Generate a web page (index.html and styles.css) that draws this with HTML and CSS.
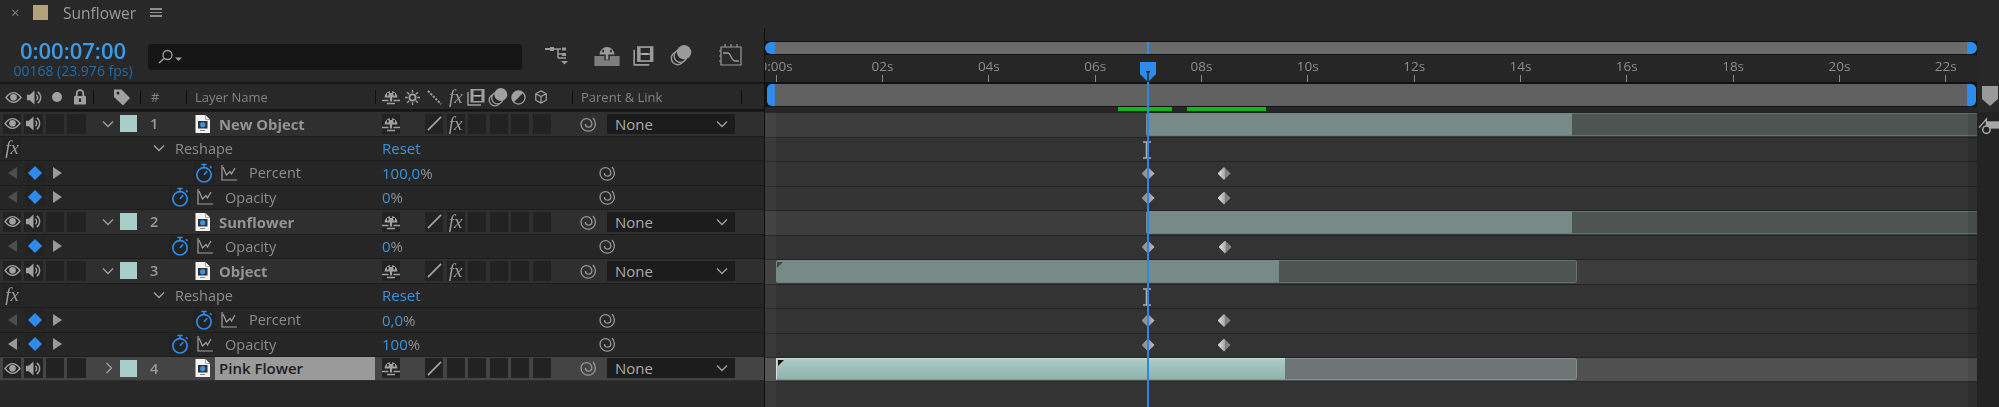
FILE: index.html
```html
<!DOCTYPE html>
<html lang="en">
<head>
<meta charset="utf-8">
<title>Sunflower timeline</title>
<link rel="stylesheet" href="styles.css">
</head>
<body>
<svg class="defs" width="0" height="0" aria-hidden="true">
  <symbol id="eye" viewBox="0 0 18 14"><path d="M1 7C4 3 6.500 1.800 9 1.800S14 3 17 7c-3 4-5.500 5.200-8 5.200S4 11 1 7z" fill="none" stroke="currentColor" stroke-width="1.500"/><circle cx="9" cy="6.800" r="3.600" fill="currentColor"/></symbol>
  <symbol id="speaker" viewBox="0 0 18 18"><path d="M1 6h3l5-4.500v15L4 12H1z" fill="currentColor"/><path d="M11 6a4 4 0 0 1 0 6M12.500 3a7.500 7.500 0 0 1 0 12" fill="none" stroke="currentColor" stroke-width="1.500"/></symbol>
  <symbol id="lock" viewBox="0 0 14 16"><rect x="1" y="7" width="12" height="8.500" rx="1" fill="currentColor"/><path d="M3.700 7V4.500a3.300 3.300 0 0 1 6.600 0V7" fill="none" stroke="currentColor" stroke-width="1.800"/><rect x="6" y="9.500" width="2" height="3.500" fill="#262626"/></symbol>
  <symbol id="tag" viewBox="0 0 18 18"><path d="M1 1.500h7.500L17 10l-7 7.500L1 9z" fill="currentColor"/><circle cx="5" cy="5" r="1.500" fill="#262626"/></symbol>
  <symbol id="shy" viewBox="0 0 18 16"><path d="M2.500 8.500a6.500 6.500 0 0 1 13 0z" fill="currentColor"/><rect x="7.900" y="2" width="2.200" height="10.500" fill="currentColor"/><rect x="5" y="4" width="1.700" height="2.500" fill="#262626"/><rect x="11.300" y="4" width="1.700" height="2.500" fill="#262626"/><rect x="7.900" y="2" width="2.200" height="2" fill="#262626"/><path d="M0 11.500h6.500M11.500 11.500H18M5 14.500h8" stroke="currentColor" stroke-width="1.300"/></symbol>
  <symbol id="sun" viewBox="0 0 16 16"><circle cx="8" cy="8" r="3.300" fill="none" stroke="currentColor" stroke-width="2"/><path d="M8 0v3M8 13v3M0 8h3M13 8h3M2.300 2.300l2.200 2.200M11.500 11.500l2.200 2.200M13.700 2.300l-2.200 2.200M4.500 11.500l-2.200 2.200" stroke="currentColor" stroke-width="1.500"/></symbol>
  <symbol id="dots" viewBox="0 0 16 16"><path d="M1 1l14 14" stroke="currentColor" stroke-width="2" stroke-dasharray="2.400 1.400"/></symbol>
  <symbol id="frames" viewBox="0 0 18 18"><path d="M1 4v13h13" fill="none" stroke="currentColor" stroke-width="1.400"/><rect x="3.500" y="1" width="14" height="13.500" fill="currentColor"/><rect x="6.500" y="2.500" width="8" height="4.500" fill="#262626"/><rect x="6.500" y="8.500" width="8" height="4.500" fill="#262626"/><path d="M8 7.700h5" stroke="#bbb" stroke-width="1.300"/></symbol>
  <symbol id="stack" viewBox="0 0 20 20"><circle cx="7" cy="13" r="5.800" fill="none" stroke="currentColor" stroke-width="1.300"/><circle cx="9.500" cy="11" r="5.800" fill="#262626" stroke="currentColor" stroke-width="1.300"/><circle cx="12.800" cy="7.500" r="6.500" fill="currentColor"/></symbol>
  <symbol id="adjust" viewBox="0 0 16 16"><circle cx="8" cy="8" r="7" fill="none" stroke="currentColor" stroke-width="1.400"/><path d="M3 13A7 7 0 0 1 13 3z" fill="currentColor"/></symbol>
  <symbol id="cube" viewBox="0 0 16 16"><path d="M8 1l6 3.300v7.400L8 15l-6-3.300V4.300zM2 4.300l6 3.300 6-3.300M8 7.600V15" fill="none" stroke="currentColor" stroke-width="1.400"/></symbol>
  <symbol id="slash" viewBox="0 0 16 16"><path d="M1 15L15 1" stroke="currentColor" stroke-width="1.700"/></symbol>
  <symbol id="spiral" viewBox="0 0 18 18"><path d="M6.500 9A3.200 3.200 0 0 0 12.900 9A5.400 5.400 0 0 0 2 9A7.200 7.200 0 0 0 16.400 9Q16.400 5.500 14 3" fill="none" stroke="currentColor" stroke-width="1.300"/></symbol>
  <symbol id="doc" viewBox="0 0 15 18"><path d="M.5 0h10l4.500 4.500V18H.5z" fill="#f2f2f2"/><path d="M10.500 0v4.500H15" fill="none" stroke="#999" stroke-width=".8"/><rect x="3" y="6" width="9.500" height="7.500" fill="#333"/><circle cx="7.700" cy="9.700" r="2.600" fill="#3a93e6"/><path d="M5 15.500h5" stroke="#888"/></symbol>
  <symbol id="watch" viewBox="0 0 20 22"><circle cx="10" cy="13" r="8" fill="none" stroke="currentColor" stroke-width="1.800"/><path d="M7 1.500h6M10 2v3M10 13l3.500-4" fill="none" stroke="currentColor" stroke-width="1.800"/><path d="M16.500 3.500l1.800 1.800" stroke="currentColor" stroke-width="1.800"/></symbol>
  <symbol id="graph" viewBox="0 0 16 16"><path d="M1 0v15h15" fill="none" stroke="currentColor" stroke-width="1.200"/><path d="M2 2l3.500 8L9 6.500 10.500 9 14 3" fill="none" stroke="currentColor" stroke-width="1.200"/></symbol>
  <symbol id="chev-d" viewBox="0 0 12 8"><path d="M1 1.500l5 5 5-5" fill="none" stroke="currentColor" stroke-width="1.300"/></symbol>
  <symbol id="chev-r" viewBox="0 0 8 12"><path d="M1.500 1l5 5-5 5" fill="none" stroke="currentColor" stroke-width="1.300"/></symbol>
  <symbol id="tri-l" viewBox="0 0 9 12"><path d="M9 0v12L0 6z" fill="currentColor"/></symbol>
  <symbol id="tri-r" viewBox="0 0 9 12"><path d="M0 0v12l9-6z" fill="currentColor"/></symbol>
</svg>

<div class="app">
  <header class="tabbar">
    <span class="tab-close">×</span>
    <span class="tab-swatch"></span>
    <span class="tab-title">Sunflower</span>
    <span class="tab-menu"><i></i><i></i><i></i></span>
  </header>

  <div class="panel">
    <section class="layers">
      <div class="controls">
        <div class="clock">
          <div class="clock-time">0:00:07:00</div>
          <div class="clock-frames">00168 (23.976 fps)</div>
        </div>
        <div class="search">
          <svg class="search-icon" viewBox="0 0 24 14"><circle cx="9.500" cy="5.500" r="4.500" fill="none" stroke="currentColor" stroke-width="1.300"/><path d="M6 9l-5 4.500" stroke="currentColor" stroke-width="1.500"/><path d="M17 8h7l-3.500 3.500z" fill="currentColor"/></svg>
        </div>
        <div class="tools">
          <svg class="tool tool-flow" viewBox="0 0 24 20"><path d="M5 4h8M13 4v9M10 4h6M13 9h8M13 13h8" stroke="currentColor" stroke-width="1.500" fill="none"/><rect x="0" y="3" width="5" height="2" fill="currentColor"/><rect x="5" y="2" width="4" height="4" fill="currentColor"/><rect x="17" y="2.500" width="4" height="3" fill="currentColor"/><rect x="17" y="8" width="4" height="3" fill="currentColor"/><path d="M16 16h7l-3.500 3.500z" fill="currentColor"/></svg>
          <svg class="tool tool-shy" viewBox="0 0 24 20"><path d="M5 9a7 7 0 0 1 14 0z" fill="currentColor"/><rect x="10.800" y="3" width="2.400" height="11" fill="currentColor"/><rect x="7.500" y="4.500" width="1.600" height="2.500" fill="#282828"/><rect x="15" y="4.500" width="1.600" height="2.500" fill="#282828"/><path d="M0 10.500h9.500v4h5v-4H24V20H0z" fill="currentColor" fill-opacity=".75"/></svg>
          <svg class="tool tool-frames"><use href="#frames"/></svg>
          <svg class="tool tool-stack"><use href="#stack"/></svg>
          <svg class="tool tool-graph" viewBox="0 0 24 22"><path d="M2 3h20v18H2zM0 7h2M0 12h2M0 17h2M6 3V0M12 3V0M18 3V0" fill="none" stroke="currentColor" stroke-width="1.200"/><path d="M4 9h5c3 0 3 8 7 8h4" fill="none" stroke="currentColor" stroke-width="1.300"/></svg>
        </div>
      </div>

      <div class="colhead">
        <div class="colhead-av">
          <svg class="i-eye"><use href="#eye"/></svg>
          <svg class="i-spk"><use href="#speaker"/></svg>
          <span class="i-dot"></span>
          <svg class="i-lock"><use href="#lock"/></svg>
        </div>
        <div class="colhead-tag"><svg class="i-tag"><use href="#tag"/></svg></div>
        <div class="colhead-num">#</div>
        <div class="colhead-name">Layer Name</div>
        <div class="colhead-sw">
          <svg class="i-shy"><use href="#shy"/></svg>
          <svg class="i-sun"><use href="#sun"/></svg>
          <svg class="i-dots"><use href="#dots"/></svg>
          <span class="fx">fx</span>
          <svg class="i-frames"><use href="#frames"/></svg>
          <svg class="i-stack"><use href="#stack"/></svg>
          <svg class="i-adj"><use href="#adjust"/></svg>
          <svg class="i-cube"><use href="#cube"/></svg>
        </div>
        <div class="colhead-parent">Parent &amp; Link</div>
      </div>

      <div class="layer-row">
        <div class="av"><span class="box"><svg class="i-eye"><use href="#eye"/></svg></span><span class="box"><svg class="i-spk"><use href="#speaker"/></svg></span><span class="box"></span><span class="box"></span></div>
        <div class="twirl"><svg class="i-chev"><use href="#chev-d"/></svg></div>
        <span class="swatch"></span><span class="num">1</span>
        <div class="file"><svg class="i-doc"><use href="#doc"/></svg></div>
        <div class="name">New Object</div>
        <div class="switches"><span class="box"><svg class="i-shy"><use href="#shy"/></svg></span><span class="box none"></span><span class="box"><svg class="i-slash"><use href="#slash"/></svg></span><span class="box"><span class="fx">fx</span></span><span class="box"></span><span class="box"></span><span class="box"></span><span class="box"></span></div>
        <div class="parent"><svg class="i-spiral"><use href="#spiral"/></svg><div class="select"><span>None</span><svg class="i-chev"><use href="#chev-d"/></svg></div></div>
      </div>
      <div class="prop-row">
        <div class="fxcell"><span class="box"><span class="fx">fx</span></span></div>
        <div class="prop-name effect"><svg class="i-chev"><use href="#chev-d"/></svg><span>Reshape</span></div>
        <div class="link">Reset</div>
      </div>
      <div class="prop-row">
        <div class="nav"><svg class="i-tri off"><use href="#tri-l"/></svg><span class="box kf"><i></i></span><svg class="i-tri"><use href="#tri-r"/></svg></div>
        <div class="prop-name deep"><span class="box watchbox"><svg class="i-watch"><use href="#watch"/></svg></span><svg class="i-graph"><use href="#graph"/></svg><span class="label">Percent</span></div>
        <div class="value"><b>100,0</b>%</div>
        <svg class="i-spiral"><use href="#spiral"/></svg>
      </div>
      <div class="prop-row">
        <div class="nav"><svg class="i-tri off"><use href="#tri-l"/></svg><span class="box kf"><i></i></span><svg class="i-tri"><use href="#tri-r"/></svg></div>
        <div class="prop-name"><span class="box watchbox"><svg class="i-watch"><use href="#watch"/></svg></span><svg class="i-graph"><use href="#graph"/></svg><span class="label">Opacity</span></div>
        <div class="value"><b>0</b>%</div>
        <svg class="i-spiral"><use href="#spiral"/></svg>
      </div>

      <div class="layer-row">
        <div class="av"><span class="box"><svg class="i-eye"><use href="#eye"/></svg></span><span class="box"><svg class="i-spk"><use href="#speaker"/></svg></span><span class="box"></span><span class="box"></span></div>
        <div class="twirl"><svg class="i-chev"><use href="#chev-d"/></svg></div>
        <span class="swatch"></span><span class="num">2</span>
        <div class="file"><svg class="i-doc"><use href="#doc"/></svg></div>
        <div class="name">Sunflower</div>
        <div class="switches"><span class="box"><svg class="i-shy"><use href="#shy"/></svg></span><span class="box none"></span><span class="box"><svg class="i-slash"><use href="#slash"/></svg></span><span class="box"><span class="fx">fx</span></span><span class="box"></span><span class="box"></span><span class="box"></span><span class="box"></span></div>
        <div class="parent"><svg class="i-spiral"><use href="#spiral"/></svg><div class="select"><span>None</span><svg class="i-chev"><use href="#chev-d"/></svg></div></div>
      </div>
      <div class="prop-row">
        <div class="nav"><svg class="i-tri off"><use href="#tri-l"/></svg><span class="box kf"><i></i></span><svg class="i-tri"><use href="#tri-r"/></svg></div>
        <div class="prop-name"><span class="box watchbox"><svg class="i-watch"><use href="#watch"/></svg></span><svg class="i-graph"><use href="#graph"/></svg><span class="label">Opacity</span></div>
        <div class="value"><b>0</b>%</div>
        <svg class="i-spiral"><use href="#spiral"/></svg>
      </div>

      <div class="layer-row">
        <div class="av"><span class="box"><svg class="i-eye"><use href="#eye"/></svg></span><span class="box"><svg class="i-spk"><use href="#speaker"/></svg></span><span class="box"></span><span class="box"></span></div>
        <div class="twirl"><svg class="i-chev"><use href="#chev-d"/></svg></div>
        <span class="swatch"></span><span class="num">3</span>
        <div class="file"><svg class="i-doc"><use href="#doc"/></svg></div>
        <div class="name">Object</div>
        <div class="switches"><span class="box"><svg class="i-shy"><use href="#shy"/></svg></span><span class="box none"></span><span class="box"><svg class="i-slash"><use href="#slash"/></svg></span><span class="box"><span class="fx">fx</span></span><span class="box"></span><span class="box"></span><span class="box"></span><span class="box"></span></div>
        <div class="parent"><svg class="i-spiral"><use href="#spiral"/></svg><div class="select"><span>None</span><svg class="i-chev"><use href="#chev-d"/></svg></div></div>
      </div>
      <div class="prop-row">
        <div class="fxcell"><span class="box"><span class="fx">fx</span></span></div>
        <div class="prop-name effect"><svg class="i-chev"><use href="#chev-d"/></svg><span>Reshape</span></div>
        <div class="link">Reset</div>
      </div>
      <div class="prop-row">
        <div class="nav"><svg class="i-tri off"><use href="#tri-l"/></svg><span class="box kf"><i></i></span><svg class="i-tri"><use href="#tri-r"/></svg></div>
        <div class="prop-name deep"><span class="box watchbox"><svg class="i-watch"><use href="#watch"/></svg></span><svg class="i-graph"><use href="#graph"/></svg><span class="label">Percent</span></div>
        <div class="value"><b>0,0</b>%</div>
        <svg class="i-spiral"><use href="#spiral"/></svg>
      </div>
      <div class="prop-row">
        <div class="nav"><svg class="i-tri"><use href="#tri-l"/></svg><span class="box kf"><i></i></span><svg class="i-tri"><use href="#tri-r"/></svg></div>
        <div class="prop-name"><span class="box watchbox"><svg class="i-watch"><use href="#watch"/></svg></span><svg class="i-graph"><use href="#graph"/></svg><span class="label">Opacity</span></div>
        <div class="value"><b>100</b>%</div>
        <svg class="i-spiral"><use href="#spiral"/></svg>
      </div>

      <div class="layer-row selected">
        <div class="av"><span class="box"><svg class="i-eye"><use href="#eye"/></svg></span><span class="box"><svg class="i-spk"><use href="#speaker"/></svg></span><span class="box"></span><span class="box"></span></div>
        <div class="twirl"><svg class="i-chev-r"><use href="#chev-r"/></svg></div>
        <span class="swatch"></span><span class="num">4</span>
        <div class="file"><svg class="i-doc"><use href="#doc"/></svg></div>
        <div class="name">Pink Flower</div>
        <div class="switches"><span class="box"><svg class="i-shy"><use href="#shy"/></svg></span><span class="box none"></span><span class="box"><svg class="i-slash"><use href="#slash"/></svg></span><span class="box"></span><span class="box"></span><span class="box"></span><span class="box"></span><span class="box"></span></div>
        <div class="parent"><svg class="i-spiral"><use href="#spiral"/></svg><div class="select"><span>None</span><svg class="i-chev"><use href="#chev-d"/></svg></div></div>
      </div>
    </section>

    <section class="timeline">
      <div class="tl-top">
        <div class="tl-head">
          <div class="nav-bar"><span class="cap cap-l"></span><span class="nav-fill"></span><span class="cap cap-r"></span></div>
          <div class="ruler">
            <div class="tick"><span>0:00s</span></div>
            <div class="tick"><span>02s</span></div>
            <div class="tick"><span>04s</span></div>
            <div class="tick"><span>06s</span></div>
            <div class="tick"><span>08s</span></div>
            <div class="tick"><span>10s</span></div>
            <div class="tick"><span>12s</span></div>
            <div class="tick"><span>14s</span></div>
            <div class="tick"><span>16s</span></div>
            <div class="tick"><span>18s</span></div>
            <div class="tick"><span>20s</span></div>
            <div class="tick"><span>22s</span></div>
          </div>
          <div class="work-bar"><span class="wcap wcap-l"></span><span class="nav-fill"></span><span class="wcap wcap-r"></span></div>
          <div class="cache"><span class="green g1"></span><span class="green g2"></span></div>
        </div>
        <div class="marker-well"><svg class="i-marker" viewBox="0 0 16 20"><path d="M0 0h16v13l-8 7-8-7z" fill="currentColor"/></svg></div>
      </div>
      <div class="tl-body">
        <div class="tl-rows">
          <div class="tl-row layer"><span class="bar bright" style="margin-left:381px;width:426px"></span><span class="bar dim grow"></span></div>
          <div class="tl-row"><svg class="i-beam" viewBox="0 0 10 18"><path d="M0 1h8M0 17h8M3.500 1v16" fill="none" stroke="currentColor" stroke-width="1.600"/></svg></div>
          <div class="tl-row"><i class="key now" style="left:383px"></i><i class="key" style="left:459px"></i></div>
          <div class="tl-row"><i class="key now" style="left:383px"></i><i class="key" style="left:459px"></i></div>
          <div class="tl-row layer"><span class="bar bright" style="margin-left:381px;width:426px"></span><span class="bar dim grow"></span></div>
          <div class="tl-row"><i class="key now" style="left:383px"></i><i class="key" style="left:460px"></i></div>
          <div class="tl-row layer"><span class="bar bright" style="margin-left:11px;width:503px"><u class="corner"></u></span><span class="bar dim end" style="width:298px"></span></div>
          <div class="tl-row"><svg class="i-beam" viewBox="0 0 10 18"><path d="M0 1h8M0 17h8M3.500 1v16" fill="none" stroke="currentColor" stroke-width="1.600"/></svg></div>
          <div class="tl-row"><i class="key now" style="left:383px"></i><i class="key" style="left:459px"></i></div>
          <div class="tl-row"><i class="key now" style="left:383px"></i><i class="key" style="left:459px"></i></div>
          <div class="tl-row layer selected"><span class="bar vivid" style="margin-left:11px;width:509px"><u class="corner"></u></span><span class="bar dim end sel" style="width:292px"></span></div>
        </div>
        <div class="gutter"><svg class="i-comp" viewBox="0 0 20 17"><path d="M1 10L8 2v8" fill="none" stroke="currentColor" stroke-width="1.300"/><path d="M8 4h12v7H8z" fill="currentColor"/><circle cx="8" cy="12" r="3.500" fill="#222" stroke="currentColor" stroke-width="1.500"/></svg></div>
      </div>
      <div class="strip-lead"></div>
      <div class="strip-trail"></div>
      <div class="playhead">
        <span class="playhead-tick"></span>
        <svg class="playhead-head" viewBox="0 0 16 20"><path d="M0 0h16v12l-8 8-8-8z" fill="#2d8ceb"/><rect x="6" y="9" width="4" height="1.500" fill="#222"/><rect x="7.300" y="9" width="1.400" height="11" fill="#222"/></svg>
        <span class="playhead-line"></span>
      </div>
    </section>
  </div>
</div>
</body>
</html>
```
FILE: styles.css
```css
* { box-sizing: border-box; }
html, body { margin: 0; padding: 0; }
body {
  width: 1999px;
  height: 407px;
  overflow: hidden;
  background: #282828;
  color: #979797;
  font-family: "Open Sans", "Noto Sans", "Liberation Sans", sans-serif;
  font-size: 14px;
}
.defs { position: absolute; }
svg { display: block; flex: none; }

.app { height: 407px; display: flex; flex-direction: column; filter: blur(.4px); }

/* tab bar */
.tabbar { height: 28px; flex: none; display: flex; align-items: center; padding: 0 0 3px 11px; }
.tab-close { width: 22px; font-size: 15px; color: #808080; line-height: 1; }
.tab-swatch { width: 15px; height: 15px; background: #b3a07d; margin-right: 15px; }
.tab-title { font-size: 15.500px; color: #9b9b9b; width: 87px; }
.tab-menu { display: flex; flex-direction: column; gap: 2px; width: 12px; }
.tab-menu i { display: block; height: 1.500px; background: #8e8e8e; }

.panel { flex: 1; display: flex; min-height: 0; }

/* left side */
.layers { width: 765px; flex: none; border-right: 1px solid #0f0f0f; }
.controls { height: 56px; display: flex; border-bottom: 2px solid #171717; padding-top: 16px; }
.clock { width: 148px; flex: none; padding-left: 2px; text-align: center; margin-top: -7px; margin-left: -2px; }
.clock-time { font-size: 22px; font-weight: 600; color: #3b9be8; line-height: 26px; }
.clock-frames { font-size: 14px; color: #1f6dab; line-height: 16px; }
.search { width: 374px; height: 26px; margin-left: 2px; background: #151515; border-radius: 3px; flex: none; padding: 5px 0 0 10px; color: #a0a0a0; }
.search-icon { width: 24px; height: 15px; }
.tools { display: flex; color: #9a9a9a; align-items: flex-start; }
.tool-flow { width: 24px; height: 20px; margin-left: 23px; margin-top: 1px; }
.tool-shy { width: 26px; height: 21px; margin-left: 25px; margin-top: 1px; }
.tool-frames { width: 21px; height: 21px; margin-left: 13px; margin-top: 1px; }
.tool-stack { width: 22px; height: 22px; margin-left: 16px; margin-top: 0; }
.tool-graph { width: 24px; height: 22px; margin-left: 27px; margin-top: 0; }

.colhead { height: 27px; display: flex; align-items: center; border-bottom: 2px solid #141414; font-size: 13px; color: #838383; }
.colhead > div { height: 100%; display: flex; align-items: center; position: relative; padding-top: 1px; }
.colhead > div::after { content: ""; position: absolute; right: 0; top: 6px; width: 1.500px; height: 14px; background: #0e0e0e; }
.colhead-av { width: 94px; padding-left: 5px; }
.colhead-av .i-spk { margin-left: 4px; }
.i-eye { width: 17px; height: 13px; color: #a0a0a0; }
.i-spk { width: 17px; height: 17px; color: #a0a0a0; }
.i-dot { width: 10px; height: 10px; border-radius: 50%; background: #a0a0a0; margin-left: 9px; }
.i-lock { width: 14px; height: 16px; color: #a0a0a0; margin-left: 11px; }
.colhead-tag { width: 47px; padding-left: 19px; }
.i-tag { width: 18px; height: 18px; color: #a0a0a0; }
.colhead-num { width: 46px; padding-left: 10px; }
.colhead-name { width: 189px; padding-left: 8px; }
.colhead-sw { width: 197px; padding-left: 6px; color: #a0a0a0; }
.colhead-sw .i-shy { margin-right: 5px; }
.colhead-sw .i-sun { width: 15px; height: 15px; margin-right: 7px; }
.colhead-sw .i-dots { width: 15px; height: 15px; margin-right: 7px; }
.colhead-sw .fx { margin-right: 4px; }
.colhead-sw .i-frames { width: 18px; height: 18px; margin-right: 3px; }
.colhead-sw .i-stack { width: 20px; height: 20px; margin-right: 3px; }
.colhead-sw .i-adj { width: 15px; height: 15px; margin-right: 8px; }
.colhead-sw .i-cube { width: 14px; height: 14px; }
.colhead-parent { width: 169px; padding-left: 8px; }

.box { width: 18px; height: 20px; background: #222; display: flex; align-items: center; justify-content: center; flex: none; }
.box.none { background: transparent; }
.fx { font-family: "Liberation Serif", serif; font-style: italic; font-size: 19px; line-height: 20px; color: #9c9c9c; }

.layer-row {
  height: 24.500px;
  display: flex;
  align-items: center;
  background: #2f2f2f;
  border-top: 1px solid #1c1c1c;
}
.prop-row {
  height: 24.500px;
  display: grid;
  grid-template-columns: 64px 319px 215px 18px;
  align-items: center;
  background: #262626;
  border-top: 1px solid #1c1c1c;
}
.layer-row.selected { background: #444; border-bottom: 1px solid #2e2e2e; }

.av { width: 94px; display: flex; gap: 3px; padding-left: 3px; flex: none; }
.av .box:nth-child(2) { width: 19px; }
.av .box:nth-child(4) { width: 19px; }
.twirl { width: 26px; padding-left: 8px; flex: none; color: #a0a0a0; }
.i-chev { width: 12px; height: 8px; color: #a0a0a0; }
.i-chev-r { width: 8px; height: 12px; margin-left: 3px; color: #a0a0a0; }
.swatch { width: 17px; height: 17px; background: #a9cdc8; flex: none; }
.num { width: 58px; padding-left: 13px; flex: none; font-size: 14.500px; font-weight: 600; color: #9a9a9a; }
.file { width: 20px; flex: none; }
.i-doc { width: 15px; height: 18px; }
.name { width: 160px; flex: none; padding-left: 4px; font-weight: 700; font-size: 14.800px; color: #949494; height: 100%; display: flex; align-items: center; }
.selected .name { background: #9a9a9a; color: #202020; font-weight: 600; font-size: 15px; }
.switches { width: 198px; flex: none; padding-left: 7px; display: flex; gap: 3.500px; }
.i-shy { width: 18px; height: 16px; color: #a0a0a0; }
.i-slash { width: 15px; height: 15px; color: #a8a8a8; }
.parent { flex: 1; display: flex; align-items: center; padding-left: 6px; }
.i-spiral { width: 18px; height: 18px; color: #999; }
.select { width: 128px; height: 20px; margin-left: 10px; background: #1c1c1c; display: flex; align-items: center; justify-content: space-between; padding: 0 7px 0 8px; font-size: 15px; color: #aaa; }

.fxcell { padding-left: 3px; }
.nav { display: flex; align-items: center; padding-left: 8px; }
.i-tri { width: 9px; height: 12px; color: #999; }
.i-tri.off { color: #4e4e4e; }
.kf { width: 20px; margin: 0 8px 0 8px; background: #232323; }
.kf i { display: block; width: 10px; height: 10px; background: #2d8ceb; transform: rotate(45deg); }
.prop-name { display: flex; align-items: center; padding-left: 105px; }
.prop-name.deep { padding-left: 129px; }
.prop-name.effect { padding-left: 89px; }
.prop-name.effect span { margin-left: 10px; font-size: 14.500px; color: #8c8c8c; }
.watchbox { width: 22px; height: 21px; }
.i-watch { width: 18px; height: 20px; color: #2d8ceb; }
.i-graph { width: 16px; height: 16px; color: #a0a0a0; margin-left: 6px; }
.label { margin-left: 12px; font-size: 14.500px; color: #8c8c8c; }
.link { color: #3b93dd; font-size: 15px; margin-left: -1px; }
.value { font-size: 15px; color: #909090; margin-left: -1px; }
.value b { font-weight: 400; color: #3b93dd; }

/* right side */
.timeline { flex: 1; position: relative; display: flex; flex-direction: column; min-width: 0; overflow: hidden; }
.tl-top { height: 84px; flex: none; display: flex; }
.tl-head { width: 1212px; flex: none; padding-top: 13px; display: flex; flex-direction: column; }
.marker-well { flex: 1; padding: 58px 0 0 5px; color: #9a9a9a; }
.i-marker { width: 16px; height: 20px; }
.nav-bar { height: 14px; display: flex; background: #121212; padding: 1px 0; flex: none; }
.nav-fill { flex: 1; background: #6a6a6a; }
.cap { width: 10px; background: #2d8ceb; }
.cap-l { border-radius: 6px 0 0 6px; }
.cap-r { border-radius: 0 6px 6px 0; }
.ruler { height: 29px; flex: none; display: flex; overflow: hidden; background: #262626; border-bottom: 2px solid #121212; }
.tick { flex: 0 0 106.330px; position: relative; display: flex; flex-direction: column; align-items: center; justify-content: flex-start; font-size: 13.500px; color: #8d8d8d; padding-top: 2px; }
.tick:first-child { margin-left: -42px; }
.tick::after { content: ""; width: 1px; height: 7px; background: #8a8a8a; }
.tick span { line-height: 18px; }
.work-bar { height: 23px; flex: none; display: flex; background: #141414; padding: 0 0 1px; }
.work-bar .nav-fill { background: #606060; }
.wcap { width: 8px; background: #2d8ceb; }
.wcap-l { border-radius: 5px 0 0 5px; margin-left: 2px; }
.wcap-r { width: 9px; border-radius: 0 5px 5px 0; margin-right: 1px; }
.cache { height: 5px; flex: none; display: flex; background: #262626; }
.green { height: 4px; background: #12b51f; }
.g1 { margin-left: 353px; width: 54px; }
.g2 { margin-left: 15px; width: 79px; }

.tl-body { flex: 1; display: flex; min-height: 0; }
.tl-rows { width: 1212px; flex: none; background: #333; }
.gutter { flex: 1; background: #232323; padding: 5px 0 0 1px; color: #a8a8a8; }
.i-comp { width: 21px; height: 18px; }
.tl-row { height: 24.500px; display: flex; position: relative; border-top: 1px solid #232323; background: #333; }
.tl-row.layer { background: #3d3d3d; padding-bottom: 1px; }
.tl-row.selected { background: #505050; border-bottom: 1px solid #2a2a2a; }
.bar { display: block; height: 100%; position: relative; }
.bright { background: #778a86; border-top: 1px solid #6d8a84; border-bottom: 1px solid #64807a; border-radius: 2px 0 0 2px; }
.dim { background: #4e5452; border-top: 1px solid #5d7570; border-bottom: 1px solid #5d7570; }
.dim.end { border-right: 1px solid #5d7570; border-radius: 0 3px 3px 0; }
.dim.sel { background: #6f7574; border-color: #7a928e; }
.grow { flex: 1; }
.vivid { background: linear-gradient(#aecdc8, #9fc0bb 40%, #91b2ad); border-top: 1px solid #cfdbd8; border-left: 1px solid #ddd; border-bottom: 1px solid #7e9a95; }
.corner { position: absolute; left: 1px; top: 1px; width: 6px; height: 6px; background: #3c4a48; clip-path: polygon(0 0, 100% 0, 0 100%); }
.vivid .corner { background: #111; }
.key { position: absolute; top: 5px; width: 13px; height: 13px; margin-left: -6.500px; background: linear-gradient(90deg, #cfcfcf 20%, #a8a8a8 50%, #7a7a7a 50%, #8f8f8f); clip-path: polygon(50% 0, 100% 50%, 50% 100%, 0 50%); }
.key.now { background: linear-gradient(90deg, #8c8c8c, #a0a0a0 60%, #c8c8c8); }
.i-beam { position: absolute; left: 378px; top: 3px; width: 10px; height: 18px; color: #b0b0b0; }

.strip-lead { position: absolute; left: 0; top: 84px; bottom: 0; width: 11px; background: rgba(255,255,255,.035); }
.strip-trail { position: absolute; left: 1203px; top: 84px; bottom: 0; width: 9px; background: rgba(0,0,0,.09); }
.playhead { position: absolute; left: 375px; top: 13px; bottom: 0; width: 16px; }
.playhead-tick { position: absolute; left: 7px; top: 1px; width: 2px; height: 12px; background: #2d8ceb; }
.playhead-head { position: absolute; left: 0; top: 21px; width: 16px; height: 20px; }
.playhead-line { position: absolute; left: 7px; top: 41px; bottom: 0; width: 2px; background: #2f86de; }
```
